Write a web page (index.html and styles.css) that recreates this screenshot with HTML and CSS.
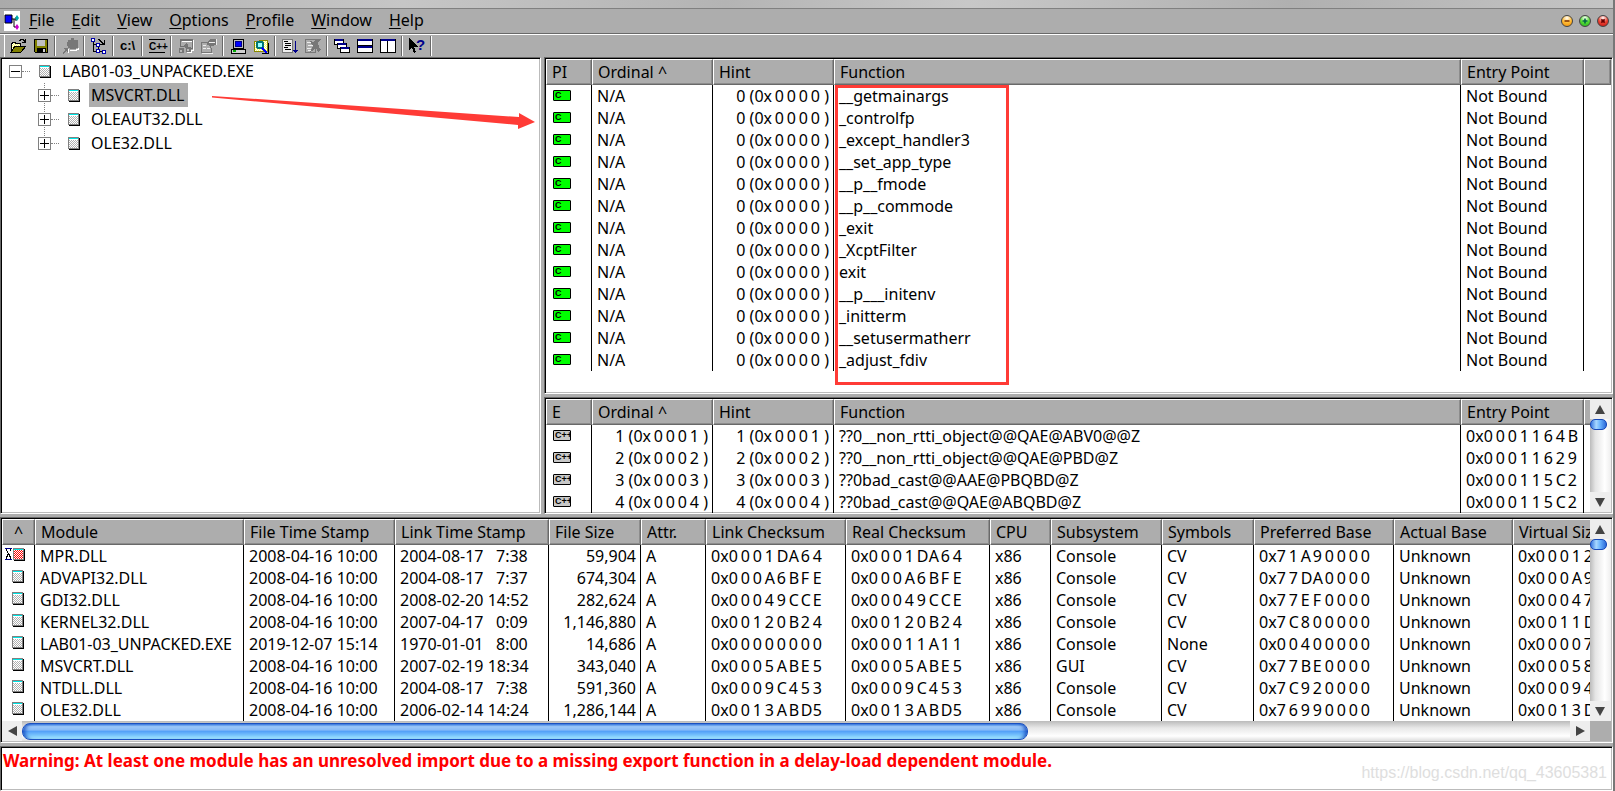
FILE: index.html
```html
<!DOCTYPE html>
<html lang="en">
<head>
<meta charset="utf-8">
<title>Dependency Walker</title>
<link rel="stylesheet" href="styles.css">
<script src="app.js" defer></script>
</head>
<body>
<svg class="defs" aria-hidden="true">
  <defs>
    <pattern id="dither" width="2" height="2" patternUnits="userSpaceOnUse"><rect width="2" height="2" fill="#fff"/><rect width="1" height="1" fill="#b0b0b0"/><rect x="1" y="1" width="1" height="1" fill="#b0b0b0"/></pattern>
    <pattern id="dither-red" width="2" height="2" patternUnits="userSpaceOnUse"><rect width="2" height="2" fill="#fff"/><rect width="1" height="1" fill="#f00"/><rect x="1" y="1" width="1" height="1" fill="#f00"/></pattern>
    <pattern id="dither-yellow" width="2" height="2" patternUnits="userSpaceOnUse"><rect width="2" height="2" fill="#ff6"/><rect width="1" height="1" fill="#fff"/><rect x="1" y="1" width="1" height="1" fill="#fff"/></pattern>
    <symbol id="module" viewBox="0 0 13 13"><path d="M1 13h11V1h-1v11H1z" fill="#000"/><path d="M0 0h11v12H0z" fill="#808080"/><path d="M1 1h9v10H1z" fill="url(#dither)"/><path d="M1 1h9v2H1z" fill="#fff"/><path d="M1 1h9v1H1z" fill="#00e5e5"/></symbol>
    <symbol id="module-red" viewBox="0 0 20 13"><path d="M9 13h11V1h-1v11H9z" fill="#000"/><path d="M8 0h11v12H8z" fill="#808080"/><path d="M9 2h9v9H9z" fill="url(#dither-red)"/><path d="M9 1h9v1H9z" fill="#00e5e5"/><path d="M0 0h7v1H0zM0 11h7v1H0z" fill="#00008b"/><path d="M1 1h1v2h1v2h1v2H3v2H2v2H1V8h1V6h1V5H2V3H1zM5 1h1v2H5v2H4v1h1v2h1v3H5V9H4V5h1z" fill="#000"/></symbol>
  </defs>
</svg>
<div class="window">
  <div class="title-strip"></div>
  <header class="menu-bar">
    <svg class="app-icon" viewBox="0 0 16 20" aria-hidden="true"><path d="M0 0h16v20H0z" fill="#fff"/><path d="M1 4h7v8H1z" fill="#00f" stroke="#000"/><path d="M8 8h4M10 8v8h3M12 6v4" stroke="#000" fill="none"/><path d="M13 4l2 3-2 3-2-3z" fill="#0aa"/><path d="M13 13l2 3-2 3-2-3z" fill="#c0c"/></svg>
    <nav class="menus">
      <button><u>F</u>ile</button><button><u>E</u>dit</button><button><u>V</u>iew</button><button><u>O</u>ptions</button><button><u>P</u>rofile</button><button><u>W</u>indow</button><button><u>H</u>elp</button>
    </nav>
    <div class="window-buttons">
      <button class="orb orb-min" aria-label="Minimize"><svg viewBox="0 0 12 12"><path d="M3 6h6" stroke="#8a3b00" stroke-width="2"/></svg></button>
      <button class="orb orb-max" aria-label="Restore"><svg viewBox="0 0 12 12"><path d="M3 6h6M6 3v6" stroke="#064" stroke-width="2"/></svg></button>
      <button class="orb orb-close" aria-label="Close"><svg viewBox="0 0 12 12"><path d="M4 4l4 4M8 4l-4 4" stroke="#600" stroke-width="2"/></svg></button>
    </div>
  </header>
  <div class="toolbar" role="toolbar" aria-label="Tools">
    <button aria-label="Open"><svg viewBox="0 0 16 16"><path d="M1 14V5h1V4h3v1h5v3" fill="url(#dither-yellow)" stroke="#000"/><path d="M1 14L5 8h11l-5 6z" fill="#808000" stroke="#000"/><path d="M9 2h1V1h3v1h1v2M12 4h4M15 1v3" fill="none" stroke="#000"/></svg></button>
    <button aria-label="Save"><svg viewBox="0 0 16 16"><path d="M1.500 1.500h13v13h-12l-1-1z" fill="#808000" stroke="#000"/><path d="M4 2h8v6H4z" fill="#c0c0c0"/><path d="M4 10h9v5H4z" fill="#000"/><path d="M10 11h2v3h-2z" fill="#d0d0d0"/></svg></button>
    <i class="sep"></i>
    <button aria-label="Auto expand"><svg viewBox="0 0 16 16"><path d="M6 2h3V0h3v2h4v8h-2v1H8v-1H6V8H5V4h1z" fill="#777"/><path d="M1 10h5v5l-2-2-3 3-1-1 3-3z" fill="#777"/><path d="M6 15V11M16 10v1h-2v1H8" stroke="#fff" fill="none"/></svg></button>
    <i class="sep"></i>
    <button aria-label="Full paths"><svg viewBox="0 0 16 16"><path d="M2 4h1v10H2zM3 6h4v1H3zM3 13h9v1H3zM7 8h1v4H7z" fill="#000"/><path d="M0 0h4v4H0zM5 5h4v4H5zM5 11h4v4H5zM11 12h4v4h-4z" fill="#00a"/><path d="M1 1h2v2H1zM6 6h2v2H6zM6 12h2v2H6zM12 13h2v2h-2z" fill="#fff"/><path d="M7 1h2v1h1v1h1v1h1v1h1V2h1v5H9V6h2V5h-1V4H9V3H8V2H7z" fill="#000"/></svg></button>
    <i class="sep"></i>
    <button aria-label="Show full paths"><svg viewBox="0 0 16 16"><text x="0" y="12" class="glyph glyph-lg">c:\</text></svg></button>
    <i class="sep"></i>
    <button aria-label="Undecorate C++ functions"><svg viewBox="0 0 16 16"><path d="M0 1.500h16M0 14.500h16" stroke="#000"/><text x="0" y="12" class="glyph">C++</text></svg></button>
    <i class="sep"></i>
    <button aria-label="Highlight dependency"><svg viewBox="0 0 16 16"><path d="M2 1h13v10h-3v-1h2V3H3v5h7v1H2z" fill="#707070"/><path d="M1 10h5v5H1zM8 9h5v5H8zM5 8l3-3 2 2-3 3z" fill="#777"/><path d="M2 12h2v2H2zM9 11h2v2H9z" fill="#bbb"/><path d="M15.500 2v10h-3M13.500 12v2.500h-5M4 3.500h10" fill="none" stroke="#fff"/></svg></button>
    <button aria-label="Properties"><svg viewBox="0 0 16 16"><path d="M0 4h7v1H1v9h9v-4h1v5H0z" fill="#777"/><path d="M2 7h3v1H2zM2 10h3v1H2zM6 10h3v1H6zM1 15h11v1H1z" fill="#eee"/><path d="M6 4l4-3h5v6l-5 1v2H9V8L6 7z" fill="#777"/><path d="M8 4h6v1H8zM15 1h1v6h-1z" fill="#eee"/></svg></button>
    <i class="sep"></i>
    <button aria-label="System information"><svg viewBox="0 0 16 16"><path d="M3 1h10v9H3z" fill="#c0c0c0" stroke="#000"/><path d="M5 3h6v5H5z" fill="#00f" stroke="#008"/><path d="M1 11h14v4H1z" fill="#d0d0d0" stroke="#000"/><path d="M3 13h3" stroke="#0a0" stroke-width="2"/></svg></button>
    <button aria-label="Module search order"><svg viewBox="0 0 16 16"><path d="M1 3h5l1-1h7v11H1z" fill="url(#dither-yellow)" stroke="#880"/><path d="M15 5v10H9" fill="none" stroke="#000"/><circle cx="7" cy="7" r="3.500" fill="#9ff" stroke="#077" stroke-width="2"/><path d="M9 10l5 5" stroke="#00f" stroke-width="2"/></svg></button>
    <i class="sep"></i>
    <button aria-label="Sort log"><svg viewBox="0 0 16 16"><path d="M.5 1.500h10v13H.5z" fill="#eee" stroke="#777"/><path d="M2 3.500h4M3 5.500h6M3 7.500h6M2 9.500h4M3 11.500h6" stroke="#000"/><path d="M13 3h1v9h2v1h-1v1h-1v1h-1v-1h-1v-1h-1v-1h2z" fill="#00008b"/></svg></button>
    <button aria-label="Clear log"><svg viewBox="0 0 16 16"><path d="M.5 1.500h10v13H.5z" fill="none" stroke="#777"/><path d="M2 4h4M3 7h5M2 10h4M3 12h5" stroke="#eee"/><path d="M5 3l3 1 4-3h4l-3 4 1 4 2 3-3 2-2-4-4 3-2 1 3-6z" fill="#777"/></svg></button>
    <i class="sep"></i>
    <button aria-label="Cascade"><svg viewBox="0 0 16 16"><g fill="#fff" stroke="#000"><path d="M.5 1.500h9v5h-9zM3.500 5.500h9v5h-9zM6.500 9.500h9v5h-9z"/></g><path d="M1 1h8v2H1zM4 5h8v2H4zM7 9h8v2H7z" fill="#00008b"/></svg></button>
    <button aria-label="Tile horizontally"><svg viewBox="0 0 16 16"><path d="M.5 1.500h15v13H.5zM0 7.500h16" fill="#fff" stroke="#000"/><path d="M1 1h14v2H1zM1 8h14v2H1z" fill="#00008b"/></svg></button>
    <button aria-label="Tile vertically"><svg viewBox="0 0 16 16"><path d="M.5 1.500h15v13H.5zM7.500 2v13" fill="#fff" stroke="#000"/><path d="M1 1h14v2H1z" fill="#00008b"/></svg></button>
    <i class="sep"></i>
    <button aria-label="Context help"><svg viewBox="0 0 16 16"><path d="M0 0v12l3-3 2 6 2-1-2-5h4z" fill="#000"/><text x="7" y="12" class="glyph-help">?</text></svg></button>
    <i class="sep"></i>
  </div>

  <main class="workspace">
    <div class="upper">
      <section class="pane tree" aria-label="Module tree">
        <div class="node"><button class="toggle minus" aria-label="Collapse"></button><svg class="mod"><use href="#module"/></svg><span class="name">LAB01-03_UNPACKED.EXE</span></div>
        <div class="children">
          <div class="node"><button class="toggle" aria-label="Expand"></button><svg class="mod"><use href="#module"/></svg><span class="name selected">MSVCRT.DLL</span></div>
          <div class="node"><button class="toggle" aria-label="Expand"></button><svg class="mod"><use href="#module"/></svg><span class="name">OLEAUT32.DLL</span></div>
          <div class="node"><button class="toggle" aria-label="Expand"></button><svg class="mod"><use href="#module"/></svg><span class="name">OLE32.DLL</span></div>
        </div>
      </section>
      <div class="functions">
        <section class="pane imports">
          <table class="list fn-list">
            <colgroup><col class="w-kind"><col class="w-ord"><col class="w-ord"><col><col class="w-entry"><col class="w-rest"></colgroup>
            <thead><tr><th>PI</th><th>Ordinal ^</th><th>Hint</th><th>Function</th><th>Entry Point</th><th></th></tr></thead>
            <tbody id="imports"></tbody>
          </table>
          <div class="mark-box"></div>
        </section>
        <section class="pane exports">
          <table class="list fn-list">
            <colgroup><col class="w-kind"><col class="w-ord"><col class="w-ord"><col><col class="w-entry"><col class="w-rest"></colgroup>
            <thead><tr><th>E</th><th>Ordinal ^</th><th>Hint</th><th>Function</th><th>Entry Point</th><th></th></tr></thead>
            <tbody id="exports"></tbody>
          </table>
          <div class="vscroll"><button class="arrow up" aria-label="Scroll up"></button><span class="thumb"></span><button class="arrow down" aria-label="Scroll down"></button></div>
        </section>
      </div>
      <svg class="mark-arrow" viewBox="0 0 323 34" aria-hidden="true"><path d="M0 0L307 21V17L323 26 306 33V29L0 1.500z" fill="#ff3b36"/></svg>
    </div>
    <section class="pane modules">
      <div class="modules-view">
        <table class="list mod-list">
          <colgroup><col class="m-icon"><col class="m-name"><col class="m-file"><col class="m-link"><col class="m-size"><col class="m-attr"><col class="m-lsum"><col class="m-rsum"><col class="m-cpu"><col class="m-sub"><col class="m-sym"><col class="m-pref"><col class="m-act"><col class="m-virt"></colgroup>
          <thead><tr><th class="center">^</th><th>Module</th><th>File Time Stamp</th><th>Link Time Stamp</th><th>File Size</th><th>Attr.</th><th>Link Checksum</th><th>Real Checksum</th><th>CPU</th><th>Subsystem</th><th>Symbols</th><th>Preferred Base</th><th>Actual Base</th><th>Virtual Siz</th></tr></thead>
          <tbody id="modules"></tbody>
        </table>
        <div class="vscroll"><button class="arrow up" aria-label="Scroll up"></button><span class="thumb"></span><button class="arrow down" aria-label="Scroll down"></button></div>
      </div>
      <div class="hscroll"><button class="arrow left" aria-label="Scroll left"></button><div class="track"><div class="hthumb"></div></div><button class="arrow right" aria-label="Scroll right"></button></div>
    </section>
    <section class="pane log"><p>Warning: At least one module has an unresolved import due to a missing export function in a delay-load dependent module.</p><span class="watermark">https://blog.csdn.net/qq_43605381</span></section>
  </main>
</div>
</body>
</html>
```
FILE: styles.css
```css
* { box-sizing: border-box; }
body {
  margin: 0;
  font: 16px/22px "Noto Sans", "Liberation Sans", sans-serif;
  color: #000;
  background: #adadad;
}
button { font: inherit; color: inherit; background: none; border: 0; padding: 0; }
.defs { position: absolute; width: 0; height: 0; }
.window {
  display: flex;
  flex-direction: column;
  height: 100vh;
  border-right: 2px solid #777;
  overflow: hidden;
}
.title-strip {
  flex: none;
  height: 9px;
  background: linear-gradient(90deg, #aaa, #c6c6c6 25%, #b4b4b4 45%, #c8c8c8 60%, #b0b0b0 80%, #c4c4c4);
  border-bottom: 1px solid #808080;
}
.menu-bar {
  flex: none;
  display: flex;
  align-items: center;
  height: 24px;
  padding: 0 4px;
}
.app-icon { width: 16px; height: 20px; }
.menus { display: flex; flex: 1; }
.menus button { padding: 0 8px 0 9px; line-height: 20px; margin-bottom: 2px; }
.menus u { text-underline-offset: 2px; text-decoration-thickness: 1px; text-decoration-skip-ink: none; }
.window-buttons { display: flex; gap: 6px; }
.orb { width: 12px; height: 12px; border-radius: 50%; border: 1px solid #444; display: flex; }
.orb svg { width: 100%; }
.orb-min { background: radial-gradient(circle at 50% 20%, #fff, #fb3 50%, #e80); }
.orb-max { background: radial-gradient(circle at 50% 20%, #fff, #5d3 50%, #2a2); }
.orb-close { background: radial-gradient(circle at 50% 20%, #fff, #e43 50%, #b11); }

.toolbar {
  flex: none;
  display: flex;
  align-items: center;
  height: 24px;
  padding-left: 6px;
  border-top: 1px solid #696969;
  box-shadow: inset 0 1px #fff, inset 4px 0 #adadad, inset 5px 0 #fff;
}
.toolbar button { width: 23px; height: 22px; display: flex; align-items: center; justify-content: center; }
.toolbar svg { width: 16px; height: 16px; shape-rendering: crispEdges; overflow: visible; }
.sep { width: 2px; height: 20px; margin: 0 2px; border-left: 1px solid #696969; border-right: 1px solid #fff; }
.glyph { font: bold 10px "Liberation Sans", sans-serif; }
.glyph-lg { font-size: 13px; }
.glyph-help { font: bold 15px "Liberation Sans", sans-serif; fill: #00008b; }

.workspace {
  flex: 1;
  min-height: 0;
  display: grid;
  grid-template-rows: minmax(0, 457fr) minmax(0, 226fr) minmax(0, 45fr);
  gap: 3px;
}
.upper {
  position: relative;
  display: grid;
  grid-template-columns: minmax(0, 541fr) minmax(0, 1069fr);
  grid-template-rows: minmax(0, 1fr);
  gap: 3px;
}
.functions { display: grid; grid-template-rows: minmax(0, 337fr) minmax(0, 117fr); gap: 3px; }
.pane {
  position: relative;
  background: #fff;
  border: 1px solid;
  border-color: #696969 #fff #fff #696969;
  box-shadow: inset 1px 1px #000, inset -1px -1px #bbb;
  padding: 1px;
  overflow: hidden;
  min-width: 0;
}

.tree { line-height: 24px; }
.node { display: flex; align-items: center; height: 24px; padding-left: 7px; }
.toggle {
  position: relative;
  width: 13px;
  height: 13px;
  border: 1px solid #808080;
  background: linear-gradient(#000, #000) center / 9px 1px no-repeat, linear-gradient(#000, #000) center / 1px 9px no-repeat, #fff;
}
.toggle.minus { background: linear-gradient(#000, #000) center / 9px 1px no-repeat, #fff; }
.node .mod { margin-left: 17px; }
.node::before { content: ""; order: 1; width: 8px; border-top: 1px dotted #808080; margin-right: -8px; }
.node .mod, .node .name { order: 2; }
.mod { display: block; width: 13px; height: 13px; shape-rendering: crispEdges; }
.name { margin-left: 7px; padding: 0 3px; }
.selected { background: #adadad; padding: 0 4px 0 2px; margin-left: 8px; }
.children { padding-left: 29px; background: repeating-linear-gradient(#808080 0 1px, #fff 1px 2px) 42px 0 / 1px 60px no-repeat; }

.list { width: 100%; table-layout: fixed; border-collapse: separate; border-spacing: 0; }
.list th, .list td { padding: 0; white-space: pre; overflow: hidden; text-align: left; font-weight: normal; }
.list th {
  height: 26px;
  padding: 0 0 1px 5px;
  background: #adadad;
  border: 1px solid;
  border-color: #fff #696969 #696969 #fff;
  box-shadow: inset -1px -1px #8c8c8c;
}
.list td { height: 22px; padding: 0 4px 0 5px; border-right: 1px solid #000; }
.list td:last-child { border-right: 0; }
.list td.num { text-align: right; }
.list .center { text-align: center; padding-left: 0; }
.list td.center { padding: 0; }
.hex { display: inline-block; width: 12px; }
.hex-end { display: inline-block; width: 9px; text-align: right; }
.w-kind { width: 46px; }
.w-ord { width: 121px; }
.w-entry { width: 123px; }
.w-rest { width: 27px; }
.kind { display: block; width: 18px; height: 11px; margin: 0 0 2px 2px; border: 1px solid #000; border-radius: 1px; overflow: hidden; font: bold 9px/9px "Liberation Sans", sans-serif; padding-left: 1px; }
.kind-c { background: #0f0; }
.kind-cpp { background: #c8c8c8; }

.modules { display: flex; flex-direction: column; }
.modules-view { position: relative; flex: 1; min-height: 0; overflow: hidden; }
.mod-list { width: 1588px; min-width: 100%; }
.mod-list td .mod { margin: 0 0 4px 10px; }
.mod-list td .mod-wide { width: 20px; margin-left: 3px; }
.m-icon { width: 33px; }
.m-name { width: 209px; }
.m-file { width: 151px; }
.m-link { width: 154px; }
.m-size { width: 92px; }
.m-attr { width: 65px; }
.m-lsum { width: 140px; }
.m-rsum { width: 144px; }
.m-cpu { width: 61px; }
.m-sub { width: 111px; }
.m-sym { width: 92px; }
.m-pref { width: 140px; }
.m-act { width: 119px; }

.vscroll {
  position: absolute;
  inset: 0 0 0 auto;
  width: 21px;
  display: flex;
  flex-direction: column;
  background: linear-gradient(90deg, #bbb, #e4e4e4 25%, #fff 70%, #eee);
}
.exports .vscroll { inset: 1px 1px 1px auto; }
.arrow { flex: none; width: 20px; height: 20px; background: #eee; display: flex; align-items: center; justify-content: center; }
.arrow::before { content: ""; border: 5px solid transparent; }
.up::before { border-bottom: 9px solid #444; border-top: 0; }
.down::before { border-top: 9px solid #444; border-bottom: 0; }
.left::before { border-right: 9px solid #444; border-left: 0; }
.right::before { border-left: 9px solid #444; border-right: 0; }
.down { margin-top: auto; }
.thumb { flex: none; width: 17px; height: 11px; border-radius: 5px; border: 1px solid #1748b8; background: linear-gradient(90deg, #3a78e0, #a8d8ff 35%, #6ab4ff 60%, #2a68d8); }
.hscroll { flex: none; display: flex; height: 20px; padding-right: 21px; background: #adadad; }
.track { flex: 1; padding-top: 2px; background: linear-gradient(#bbb, #e8e8e8 35%, #fff 75%, #ddd); }
.hthumb { width: 65%; height: 17px; border-radius: 8px; border: 1px solid #1a50c0; background: linear-gradient(#3c7ce0, #9cc8f8 18%, #8abcf8 38%, #55a2f8 50%, #78c4fc 75%, #a8ecff); box-shadow: inset 5px 0 4px -3px #1a50c0, inset -5px 0 4px -3px #1a50c0; }

.log p { margin: 2px 0 0 1px; white-space: nowrap; color: #f00; font-size: 17px; font-weight: bold; }
.watermark { position: absolute; right: 5px; bottom: 6px; font-family: "Liberation Sans", sans-serif; color: #dedede; }
.mark-box { position: absolute; left: 290px; top: 27px; width: 174px; height: 300px; border: 3px solid #ff3b36; }
.mark-arrow { position: absolute; left: 212px; top: 39px; width: 323px; height: 34px; }
```
FILE: app.js
```js
const hex = (digits) => [...digits].map((d) => `<span class="hex">${d}</span>`).join("");
const address = (digits) => "0x" + hex(digits);
const ordinal = (n) => `${n} (0x${hex(String(n).padStart(4, "0"))}<span class="hex-end">)</span>`;
const cells = (...values) => values.map((v) => `<td>${v}</td>`).join("");

const imports = [
  "__getmainargs", "_controlfp", "_except_handler3", "__set_app_type", "__p__fmode",
  "__p__commode", "_exit", "_XcptFilter", "exit", "__p___initenv", "_initterm",
  "__setusermatherr", "_adjust_fdiv",
];
document.getElementById("imports").innerHTML = imports.map((name) =>
  `<tr><td><span class="kind kind-c">C</span></td><td>N/A</td><td class="num">${ordinal(0)}</td>` +
  cells(name, "Not Bound", "") + "</tr>").join("");

const exportsList = [
  ["??0__non_rtti_object@@QAE@ABV0@@Z", "0001164B"],
  ["??0__non_rtti_object@@QAE@PBD@Z", "00011629"],
  ["??0bad_cast@@AAE@PBQBD@Z", "000115C2"],
  ["??0bad_cast@@QAE@ABQBD@Z", "000115C2"],
];
document.getElementById("exports").innerHTML = exportsList.map(([name, entry], i) =>
  `<tr><td><span class="kind kind-cpp">C++</span></td><td class="num">${ordinal(i + 1)}</td><td class="num">${ordinal(i + 1)}</td>` +
  cells(name, address(entry), "") + "</tr>").join("");

const modules = [
  ["MPR.DLL", "2008-04-16 10:00", "2004-08-17   7:38", "59,904", "0001DA64", "0001DA64", "Console", "CV", "71A90000", "00012"],
  ["ADVAPI32.DLL", "2008-04-16 10:00", "2004-08-17   7:37", "674,304", "000A6BFE", "000A6BFE", "Console", "CV", "77DA0000", "000A9"],
  ["GDI32.DLL", "2008-04-16 10:00", "2008-02-20 14:52", "282,624", "00049CCE", "00049CCE", "Console", "CV", "77EF0000", "00047"],
  ["KERNEL32.DLL", "2008-04-16 10:00", "2007-04-17   0:09", "1,146,880", "00120B24", "00120B24", "Console", "CV", "7C800000", "0011D"],
  ["LAB01-03_UNPACKED.EXE", "2019-12-07 15:14", "1970-01-01   8:00", "14,686", "00000000", "00011A11", "Console", "None", "00400000", "00007"],
  ["MSVCRT.DLL", "2008-04-16 10:00", "2007-02-19 18:34", "343,040", "0005ABE5", "0005ABE5", "GUI", "CV", "77BE0000", "00058"],
  ["NTDLL.DLL", "2008-04-16 10:00", "2004-08-17   7:38", "591,360", "0009C453", "0009C453", "Console", "CV", "7C920000", "00094"],
  ["OLE32.DLL", "2008-04-16 10:00", "2006-02-14 14:24", "1,286,144", "0013ABD5", "0013ABD5", "Console", "CV", "76990000", "0013D"],
];
document.getElementById("modules").innerHTML = modules.map((m, i) => {
  const icon = i === 0
    ? '<svg class="mod mod-wide"><use href="#module-red"/></svg>'
    : '<svg class="mod"><use href="#module"/></svg>';
  return `<tr><td class="center">${icon}</td>` + cells(m[0], m[1], m[2]) +
    `<td class="num">${m[3]}</td>` +
    cells("A", address(m[4]), address(m[5]), "x86", m[6], m[7], address(m[8]), "Unknown", address(m[9])) + "</tr>";
}).join("");
```
